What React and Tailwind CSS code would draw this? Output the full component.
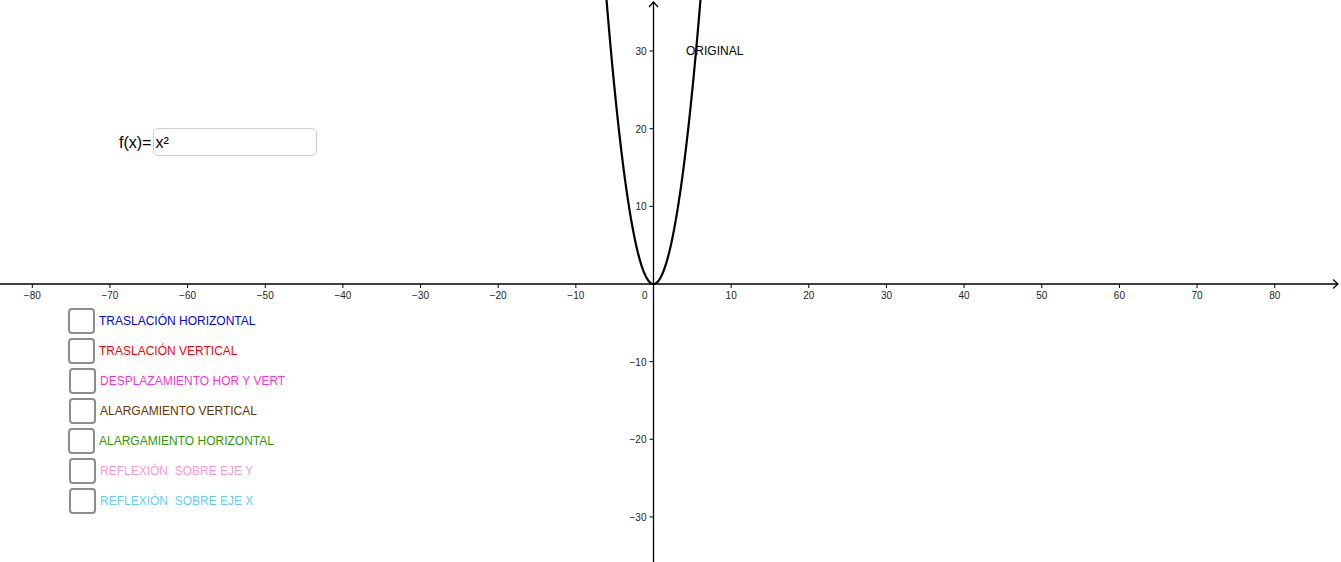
import React from "react";

const OX = 653.5;
const OY = 284;
const S = 7.765;

const rows = [
  { label: "TRASLACIÓN HORIZONTAL", color: "text-[#0000ff]", ml: "ml-0" },
  { label: "TRASLACIÓN VERTICAL", color: "text-[#ff0000]", ml: "ml-0" },
  { label: "DESPLAZAMIENTO HOR Y VERT", color: "text-[#ff33cc]", ml: "ml-px" },
  { label: "ALARGAMIENTO VERTICAL", color: "text-[#663300]", ml: "ml-px" },
  { label: "ALARGAMIENTO HORIZONTAL", color: "text-[#339900]", ml: "ml-0" },
  { label: "REFLEXIÓN  SOBRE EJE Y", color: "text-[#ff99cc]", ml: "ml-px" },
  { label: "REFLEXIÓN  SOBRE EJE X", color: "text-[#66ccff]", ml: "ml-px" },
];

function Graph() {
  const xs = [];
  for (let k = -80; k <= 80; k += 10) if (k !== 0) xs.push(k);
  const ys = [30, 20, 10, -10, -20, -30];
  const pts = [];
  for (let i = 0; i <= 200; i++) {
    const x = -6.2 + (12.4 * i) / 200;
    pts.push(`${(OX + x * S).toFixed(2)},${(OY - x * x * S).toFixed(2)}`);
  }
  const fnt = { fontFamily: '"Liberation Sans", Arial, sans-serif' };
  return (
    <svg width="1341" height="562" className="block" style={fnt}>
      <line x1="0" y1={OY} x2="1338" y2={OY} stroke="#000" strokeWidth="1.3" />
      <line x1={OX} y1="562" x2={OX} y2="2" stroke="#000" strokeWidth="1.3" />
      <polyline points={`1333,279.5 1338,284 1333,288.5`} fill="none" stroke="#000" strokeWidth="1.2" />
      <polyline points={`${OX - 4.5},7 ${OX},2 ${OX + 4.5},7`} fill="none" stroke="#000" strokeWidth="1.2" />
      {xs.map((k) => {
        const x = OX + k * S;
        return (
          <g key={k}>
            <line x1={x} y1={OY} x2={x} y2={OY + 4} stroke="#000" strokeWidth="1" />
            <text x={x} y={OY + 15} fontSize="10" textAnchor="middle" fill="#222">
              {k < 0 ? `\u2212${-k}` : k}
            </text>
          </g>
        );
      })}
      <text x={OX - 6} y={OY + 15} fontSize="10" textAnchor="end" fill="#222">0</text>
      {ys.map((k) => {
        const y = OY - k * S;
        return (
          <g key={k}>
            <line x1={OX - 4} y1={y} x2={OX} y2={y} stroke="#000" strokeWidth="1" />
            <text x={OX - 7} y={y + 4} fontSize="10" textAnchor="end" fill="#222">
              {k < 0 ? `\u2212${-k}` : k}
            </text>
          </g>
        );
      })}
      <polyline points={pts.join(" ")} fill="none" stroke="#000" strokeWidth="2.2" strokeLinejoin="round" />
      <text x="686" y="55" fontSize="12" fill="#000">ORIGINAL</text>
    </svg>
  );
}

export default function App() {
  return (
    <div className="relative w-[1341px] h-[562px] overflow-hidden bg-white font-['Liberation_Sans',Arial,sans-serif]">
      <Graph />
      <div className="absolute left-[119px] top-[128px] h-[28px] flex items-center">
        <span className="text-[16px] text-black leading-none pt-[2px]">f(x)=</span>
        <div className="ml-[2px] w-[164px] h-[28px] border border-[#cccccc] rounded-[5px] bg-white flex items-center pl-[1px] pt-[2px] text-[16px] text-black">
          x²
        </div>
      </div>
      <div className="absolute left-[68px] top-[308px] flex flex-col gap-[4px]">
        {rows.map((r) => (
          <div key={r.label} className={`flex items-center h-[26px] ${r.ml}`}>
            <div className="w-[27px] h-[26px] border-2 border-[#8c8c8c] rounded-[4px] bg-white" />
            <span className={`ml-[4px] text-[12px] whitespace-pre ${r.color}`}>{r.label}</span>
          </div>
        ))}
      </div>
    </div>
  );
}
